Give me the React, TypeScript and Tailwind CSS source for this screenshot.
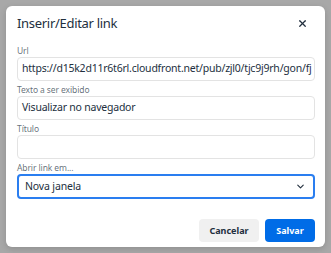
import { ChevronDown, X } from 'lucide-react';

function Field({ label, value }: { label: string; value?: string }) {
  return (
    <div className="flex flex-col">
      <label className="pt-[3px] pb-[1px] text-[8.5px] leading-[11px] tracking-[-0.1px] text-[#222f3e]/70">{label}</label>
      <div className="h-[24px] rounded-[4px] border border-[#e3e3e3] bg-white px-[4px] flex items-center overflow-hidden whitespace-nowrap text-[10.5px] tracking-[-0.22px] text-[#222f3e]">
        {value}
      </div>
    </div>
  );
}

export default function App() {
  return (
    <div className="w-[331px] h-[253px] bg-[#a8a8a8] p-[6px]" style={{ fontFamily: '"Noto Sans", "Open Sans", sans-serif' }}>
      <div className="w-[319px] h-[241px] bg-white rounded-[6px] shadow-[0_2px_6px_rgba(0,0,0,0.15)] flex flex-col">
        <div className="flex items-center justify-between h-[35px] pl-[11px] pr-[17px]">
          <h1 className="text-[13px] tracking-[-0.3px] text-[#222f3e]">Inserir/Editar link</h1>
          <X size={11} strokeWidth={2.8} className="text-[#222f3e]" />
        </div>
        <div className="flex flex-col pl-[11px] pr-[10px] pt-[1px]">
          <Field label="Url" value="https://d15k2d11r6t6rl.cloudfront.net/pub/zjl0/tjc9j9rh/gon/fj" />
          <Field label="Texto a ser exibido" value="Visualizar no navegador" />
          <Field label="Título" />
          <div className="flex flex-col">
            <label className="pt-[3px] pb-[1px] text-[8.5px] leading-[11px] tracking-[-0.1px] text-[#222f3e]/70">Abrir link em...</label>
            <div className="h-[25px] rounded-[4px] border-2 border-[#2a7ef0] bg-white pl-[6px] pr-[7px] flex items-center justify-between text-[10.5px] tracking-[-0.15px] text-[#222f3e]">
              <span>Nova janela</span>
              <ChevronDown size={11} strokeWidth={2.4} className="text-[#222f3e]" />
            </div>
          </div>
        </div>
        <div className="flex justify-end gap-[6px] pr-[10px] mt-auto pb-[5px]">
          <button className="h-[23px] w-[60px] rounded-[4px] bg-[#f0f0f0] text-[9px] font-bold text-[#222f3e]">Cancelar</button>
          <button className="h-[23px] w-[50px] rounded-[4px] bg-[#006ce7] text-[9px] font-bold text-white">Salvar</button>
        </div>
      </div>
    </div>
  );
}
